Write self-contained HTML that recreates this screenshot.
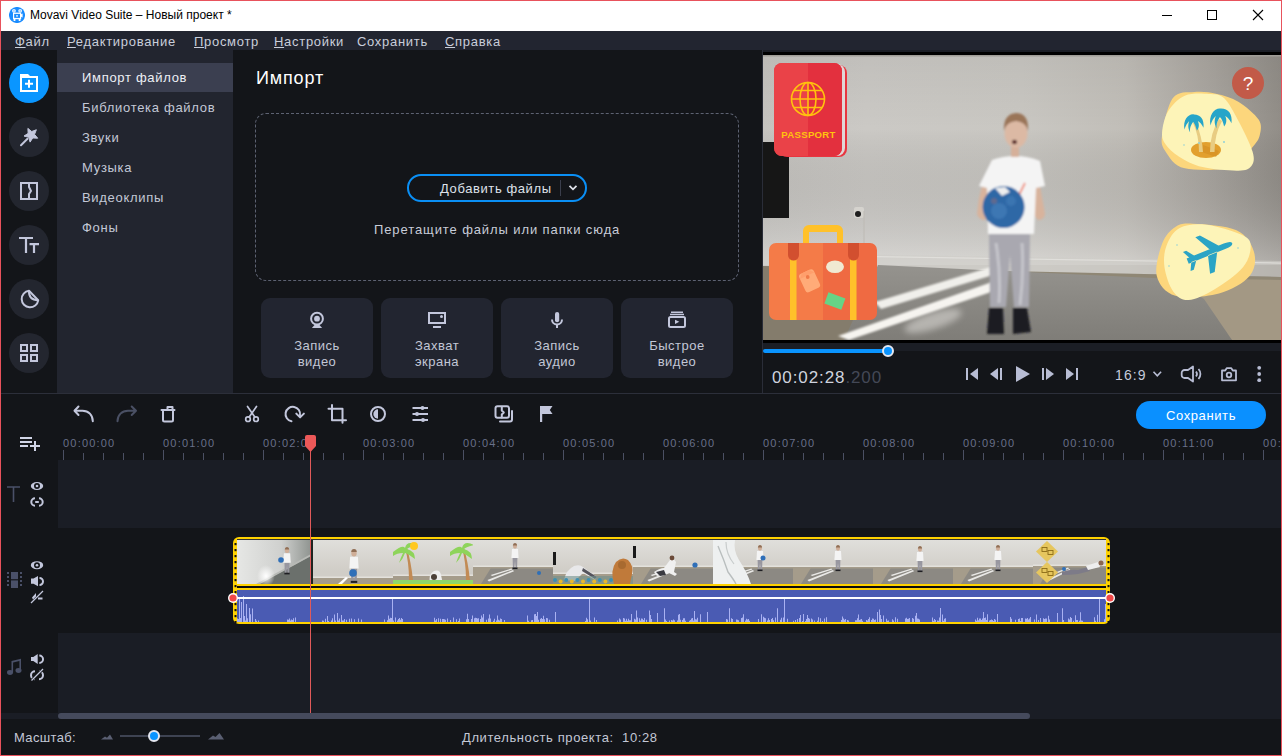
<!DOCTYPE html>
<html><head><meta charset="utf-8">
<style>
*{margin:0;padding:0;box-sizing:border-box}
html,body{width:1282px;height:756px;overflow:hidden;background:#131519;font-family:"Liberation Sans",sans-serif}
.a{position:absolute}
#frame{position:absolute;left:0;top:0;width:1282px;height:756px;border:1px solid #e8525c;pointer-events:none;z-index:100}
.t{position:absolute;white-space:nowrap}
.menu{color:#c9cedb;font-size:13px;letter-spacing:0.7px;top:34px}
.menu u{text-decoration:underline;text-underline-offset:1px;text-decoration-thickness:1px}
.sub{left:82px;color:#c3c8d6;font-size:13px;letter-spacing:0.7px}
.circ{position:absolute;left:9px;width:40px;height:40px;border-radius:50%;background:#23262f}
.card{position:absolute;top:298px;width:112px;height:80px;border-radius:9px;background:#222530}
.cardt{position:absolute;left:0;width:112px;top:40px;text-align:center;color:#c2c7d6;font-size:13px;line-height:16px;letter-spacing:0.5px}
.rl{position:absolute;top:437px;color:#687089;font-size:11px;letter-spacing:1.2px}
.ic{position:absolute}
</style></head><body>
<div id="frame"></div>

<!-- title bar -->
<div class="a" style="left:0;top:0;width:1282px;height:31px;background:#fff"></div>
<svg class="a" style="left:9px;top:7px" width="16" height="16" viewBox="9 7 16 16">
 <circle cx="17" cy="15" r="8.05" fill="#1a8cff"/>
 <g fill="#fff">
 <rect x="12.3" y="9.3" width="3.3" height="3.3" rx="1"/><rect x="18.5" y="9.3" width="3.3" height="3.3" rx="1"/>
 <rect x="13" y="12.6" width="8.2" height="6.6"/>
 <path d="M21 14.2l1.6-0.8v4.2l-1.6-0.8z"/>
 <rect x="13.6" y="19" width="1.8" height="2"/><rect x="18.7" y="19" width="1.8" height="2"/>
 </g>
 <g fill="#1a8cff"><rect x="13.4" y="10.4" width="1.1" height="1.1"/><rect x="19.6" y="10.4" width="1.1" height="1.1"/>
 <rect x="14.2" y="13.9" width="5.8" height="4"/></g>
 <rect x="16.2" y="15.2" width="1.6" height="1.4" fill="#fff"/>
</svg>
<div class="t" style="left:30px;top:8px;font-size:12px;color:#000">Movavi Video Suite – Новый проект *</div>
<div class="a" style="left:1162px;top:15px;width:10px;height:1px;background:#000"></div>
<div class="a" style="left:1207px;top:10px;width:10px;height:10px;border:1px solid #000"></div>
<svg class="a" style="left:1252px;top:9px" width="12" height="12" viewBox="0 0 12 12"><path d="M1 1L11 11M11 1L1 11" stroke="#000" stroke-width="1.1"/></svg>

<!-- menu bar -->
<div class="a" style="left:0;top:31px;width:1282px;height:19px;background:#222530"></div>
<div class="t menu" style="left:15px"><u>Ф</u>айл</div>
<div class="t menu" style="left:67px"><u>Р</u>едактирование</div>
<div class="t menu" style="left:194px"><u>П</u>росмотр</div>
<div class="t menu" style="left:274px"><u>Н</u>астройки</div>
<div class="t menu" style="left:357px">Сохранить</div>
<div class="t menu" style="left:445px"><u>С</u>правка</div>

<!-- left icon bar -->
<div class="a" style="left:0;top:50px;width:57px;height:343px;background:#131519"></div>
<div class="circ" style="top:63px;background:#0a96ff"></div>
<div class="circ" style="top:117px"></div>
<div class="circ" style="top:171px"></div>
<div class="circ" style="top:225px"></div>
<div class="circ" style="top:279px"></div>
<div class="circ" style="top:333px"></div>
<svg class="a" style="left:9px;top:63px" width="40" height="40" viewBox="0 0 40 40"><path d="M11 11h8l2 2h8v16h-18z M13 15v12h14v-12z" fill="#fff" fill-rule="evenodd"/><path d="M19 16.8h2v3h3v2h-3v3h-2v-3h-3v-2h3z" fill="#fff"/></svg>
<svg class="a" style="left:9px;top:117px" width="40" height="40" viewBox="0 0 40 40"><polygon points="18.89,11.40 22.73,14.54 27.36,12.74 25.56,17.37 28.70,21.21 23.74,20.93 21.06,25.11 19.80,20.30 14.99,19.04 19.17,16.36" fill="#c3c7dc" stroke="#c3c7dc" stroke-width="1" stroke-linejoin="round"/><path d="M12 28.3L18.5 21.8" stroke="#c3c7dc" stroke-width="2" stroke-linecap="round"/></svg>
<svg class="a" style="left:9px;top:171px" width="40" height="40" viewBox="0 0 40 40"><rect x="12" y="12" width="16" height="16" fill="none" stroke="#c3c7dc" stroke-width="2"/><path d="M20 12v4l2 4l-2 3v5" fill="none" stroke="#c3c7dc" stroke-width="2"/></svg>
<svg class="a" style="left:9px;top:225px" width="40" height="40" viewBox="0 0 40 40"><path d="M10 13h14M17 13v15M20.5 19.1h9.5M25 19.1v8.9" stroke="#c3c7dc" stroke-width="2.2" fill="none"/></svg>
<svg class="a" style="left:9px;top:279px" width="40" height="40" viewBox="0 0 40 40"><path d="M20 11.8A8.3 8.3 0 1 0 29.2 21.3Z" fill="none" stroke="#c3c7dc" stroke-width="2" stroke-linejoin="round"/><path d="M20 11.8Q19.5 21 29.2 21.3" fill="none" stroke="#c3c7dc" stroke-width="2"/></svg>
<svg class="a" style="left:9px;top:333px" width="40" height="40" viewBox="0 0 40 40"><g fill="none" stroke="#c3c7dc" stroke-width="2"><rect x="12" y="12" width="6" height="6"/><rect x="22" y="12" width="6" height="6"/><rect x="12" y="22" width="6" height="6"/><rect x="22" y="22" width="6" height="6"/></g></svg>


<!-- submenu -->
<div class="a" style="left:57px;top:50px;width:176px;height:343px;background:#22252f"></div>
<div class="a" style="left:57px;top:63px;width:176px;height:29px;background:#3b3f50"></div>
<div class="t sub" style="top:70px;color:#eef0f5">Импорт файлов</div>
<div class="t sub" style="top:100px">Библиотека файлов</div>
<div class="t sub" style="top:130px">Звуки</div>
<div class="t sub" style="top:160px">Музыка</div>
<div class="t sub" style="top:190px">Видеоклипы</div>
<div class="t sub" style="top:220px">Фоны</div>

<!-- import panel -->
<div class="a" style="left:233px;top:50px;width:530px;height:343px;background:#131519"></div>
<div class="t" style="left:256px;top:68px;font-size:18px;color:#fff;letter-spacing:0.85px">Импорт</div>
<div class="a" style="left:255px;top:113px;width:484px;height:168px;border:1px dashed #5d6272;border-radius:11px"></div>
<div class="a" style="left:407px;top:174px;width:180px;height:28px;border:2px solid #0a8ff5;border-radius:14px"></div>
<div class="a" style="left:560px;top:180px;width:1px;height:16px;background:#3a3e4c"></div>
<svg class="a" style="left:568px;top:184px" width="10" height="8" viewBox="0 0 10 8"><path d="M1.5 1.8L5 5.3L8.5 1.8" fill="none" stroke="#dfe2ea" stroke-width="1.8"/></svg>
<div class="t" style="left:440px;top:181px;font-size:13px;color:#dfe2ea;letter-spacing:0.6px">Добавить файлы</div>
<div class="t" style="left:374px;top:222px;font-size:13px;color:#c8ccd8;letter-spacing:0.9px">Перетащите файлы или папки сюда</div>
<div class="card" style="left:261px"><div class="cardt">Запись<br>видео</div></div>
<div class="card" style="left:381px"><div class="cardt">Захват<br>экрана</div></div>
<div class="card" style="left:501px"><div class="cardt">Запись<br>аудио</div></div>
<div class="card" style="left:621px"><div class="cardt">Быстрое<br>видео</div></div>


<svg class="a" style="left:305px;top:308px" width="24" height="24" viewBox="305 308 24 24"><circle cx="317" cy="318.7" r="5.9" fill="none" stroke="#c3c7dc" stroke-width="2"/><circle cx="317" cy="318.7" r="2.9" fill="#c3c7dc"/><path d="M314.5 325h5l2.6 3h-10.2z" fill="#c3c7dc"/></svg>
<svg class="a" style="left:425px;top:308px" width="24" height="24" viewBox="425 308 24 24"><rect x="429" y="313" width="16" height="10" fill="none" stroke="#c3c7dc" stroke-width="2"/><circle cx="441.5" cy="316.6" r="1.5" fill="#c3c7dc"/><rect x="433" y="326" width="8" height="2" fill="#c3c7dc"/></svg>
<svg class="a" style="left:545px;top:308px" width="24" height="24" viewBox="545 308 24 24"><rect x="555" y="312" width="4.2" height="10.3" rx="2.1" fill="#c3c7dc"/><path d="M552 319.5a5 5 0 0 0 10 0" fill="none" stroke="#c3c7dc" stroke-width="2"/><rect x="556" y="324.5" width="2" height="3.5" fill="#c3c7dc"/></svg>
<svg class="a" style="left:665px;top:308px" width="24" height="24" viewBox="665 308 24 24"><rect x="671" y="311.5" width="12" height="1.5" fill="#c3c7dc"/><rect x="670" y="313.7" width="14" height="1.5" fill="#c3c7dc"/><rect x="669" y="317" width="16" height="10" rx="1.5" fill="none" stroke="#c3c7dc" stroke-width="2"/><path d="M675 319.7v4.3l4.3-2.15z" fill="#c3c7dc"/></svg>

<!-- preview -->
<div class="a" style="left:763px;top:50px;width:518px;height:343px;background:#131519"></div>
<div class="a" style="left:763px;top:50px;width:518px;height:2px;background:#1b1e26"></div><div class="a" style="left:763px;top:52px;width:518px;height:3px;background:#000"></div><div class="a" style="left:762px;top:50px;width:1px;height:343px;background:#2a2d38"></div>
<svg class="a" style="left:763px;top:55px" width="518" height="285" viewBox="0 0 518 285"><defs>
<linearGradient id="wallh" x1="0" y1="0" x2="1" y2="0">
 <stop offset="0" stop-color="#c6c4c0"/><stop offset="0.2" stop-color="#cbc9c5"/><stop offset="0.5" stop-color="#c9c7c2"/><stop offset="0.7" stop-color="#c1beb8"/><stop offset="0.86" stop-color="#aaa6a0"/><stop offset="1" stop-color="#928e88"/>
</linearGradient>
<linearGradient id="wallv" x1="0" y1="0" x2="0" y2="1">
 <stop offset="0" stop-color="#000" stop-opacity="0.05"/><stop offset="0.35" stop-color="#000" stop-opacity="0"/><stop offset="1" stop-color="#fff" stop-opacity="0.28"/>
</linearGradient>
<linearGradient id="floorg" x1="0" y1="0" x2="0" y2="1">
 <stop offset="0" stop-color="#9b9285"/><stop offset="1" stop-color="#a39a8a"/>
</linearGradient>
<linearGradient id="carpet" x1="0" y1="0" x2="0" y2="1">
 <stop offset="0" stop-color="#95938e"/><stop offset="1" stop-color="#7f7d78"/>
</linearGradient>
<radialGradient id="glow" cx="0.5" cy="0.8" r="0.5"><stop offset="0" stop-color="#eceae6" stop-opacity="0.5"/><stop offset="1" stop-color="#eceae6" stop-opacity="0"/></radialGradient>
<filter id="bl" x="-20%" y="-20%" width="140%" height="140%"><feGaussianBlur stdDeviation="1.2"/></filter>
<filter id="bl2" x="-50%" y="-50%" width="200%" height="200%"><feGaussianBlur stdDeviation="3"/></filter>
</defs><rect width="518" height="285" fill="url(#wallh)"/><rect width="518" height="210" fill="url(#wallv)"/><rect x="0" y="0" width="518" height="1.5" fill="#a09d97"/><path d="M0 198L518 206V222L0 211z" fill="#cfcdc8" opacity="0.6"/><path d="M20 199.5L518 207.5v1.2L20 200.7z" fill="#e4e2de" opacity="0.8"/><path d="M0 211L518 222V285H0z" fill="#8f8775"/><path d="M0 211L180 215L120 285H0z" fill="#7d7565" opacity="0.6"/><path d="M400 223L518 225V285H469z" fill="#a39884"/><path d="M81 285L115 210L410 224L441 244L469 285z" fill="url(#carpet)"/><g filter="url(#bl)" fill="#f6f4f0"><path d="M75 281L229 227L231 236L86 285z"/><path d="M112 247L228 212L230 220L118 254z" opacity="0.95"/></g><ellipse cx="170" cy="266" rx="30" ry="8" fill="#e8e6e2" opacity="0.5" filter="url(#bl2)" transform="rotate(-18 170 266)"/><rect x="0" y="87" width="26" height="76" fill="#161616"/><rect x="91" y="152" width="10" height="11" rx="2" fill="#d5d3ce"/><circle cx="95" cy="159" r="3" fill="#1e1e1e"/><path d="M101 156v50" stroke="#bdbab4" stroke-width="1"/><g filter="url(#bl)"><path d="M226 178h41l-1 74h-15l-4 -52l-4 52h-16z" fill="#a9a8b0"/><path d="M233 188q5 30 3 60M259 188q2 30 -2 62" stroke="#d8d8de" stroke-width="3" fill="none" opacity="0.6"/><path d="M226 253h14l1 26h-17zM250 253h14l4 24l-18 2z" fill="#1b1b20"/><path d="M219 131q-4 14 -5 28q2 6 8 6l4 -6l-1 -26zM277 131l5 28q-1 6 -7 6l-5 -6l1 -26z" fill="#d8b39c"/><path d="M229 105q11 -4 23 -4q13 0 25 5l5 25l-9 2l-2 46h-46l-1 -46l-8 -2z" fill="#f4f4f4"/><path d="M262 128l-7 14" stroke="#f08a78" stroke-width="1.8"/><rect x="248" y="92" width="8" height="10" fill="#d6b09a"/><ellipse cx="253" cy="78" rx="11.5" ry="15" fill="#dcb9a4"/><path d="M241 76q-1 -17 12 -18q13 0 12 18q-2 -9 -12 -10q-10 1 -12 10z" fill="#9a7458"/><ellipse cx="251.5" cy="87" rx="2.6" ry="2.2" fill="#5b2e2a"/><circle cx="240.6" cy="152" r="21" fill="#2d67a6"/><circle cx="236" cy="156" r="8" fill="#4f8cc4" opacity="0.45"/><circle cx="248" cy="146" r="5" fill="#4f8cc4" opacity="0.4"/><circle cx="231" cy="146" r="3" fill="#c07060" opacity="0.35"/><path d="M232 133l10 -1l5 5l-8 4z" fill="#eeeeee"/></g><rect x="16" y="10" width="68" height="92" rx="8" fill="#e8353f"/><rect x="14" y="9" width="68" height="92" rx="8" fill="#e0d6d6"/><rect x="11" y="8" width="68" height="93" rx="8" fill="#e53640"/><path d="M45 8h26a8 8 0 0 1 8 8v77a8 8 0 0 1 -8 8h-26z" fill="#e3303e"/><path d="M19 8h26v93h-26a8 8 0 0 1 -8 -8v-77a8 8 0 0 1 8 -8z" fill="#ea4248"/><g fill="none" stroke="#ffc20e" stroke-width="1.6"><circle cx="45" cy="44" r="16.5"/><ellipse cx="45" cy="44" rx="8" ry="16.5"/><path d="M45 27.5v33M28.5 44h33M31 35.5h28M31 52.5h28"/></g><text x="45.5" y="83" text-anchor="middle" font-family="Liberation Sans" font-weight="bold" font-size="9.6" fill="#ffc20e" letter-spacing="0.3">PASSPORT</text><path d="M40 188v-12a6 6 0 0 1 6 -6h28a6 6 0 0 1 6 6v12h-6v-11h-28v11z" fill="#ffc12a"/><rect x="6" y="158" width="108" height="107" rx="7" fill="none"/><path d="M13 188h47v77h-47a7 7 0 0 1 -7 -7v-63a7 7 0 0 1 7 -7z" fill="#f47b48"/><path d="M60 188h47a7 7 0 0 1 7 7v63a7 7 0 0 1 -7 7h-47z" fill="#ef6a42"/><rect x="27" y="200" width="6.5" height="65" fill="#ffc12a"/><rect x="87" y="200" width="6.5" height="65" fill="#ffc12a"/><path d="M25 188h11v12a5 5 0 0 1 -11 0z M85 188h11v12a5 5 0 0 1 -11 0z" fill="#d24f2f"/><ellipse cx="72" cy="211.8" rx="9" ry="6.3" fill="#f0e9d2"/><g transform="rotate(-25 46.6 225.8)"><rect x="38.6" y="215.8" width="16" height="20" rx="3" fill="#ffab78"/><path d="M38.6 220l4 -4.2h8l4 4.2z" fill="#ff9f6c"/></g><circle cx="44.7" cy="222" r="1.9" fill="#f07a48"/><rect x="62.9" y="240" width="18" height="12" fill="#66d486" transform="rotate(20 71.9 246)"/><path d="M409.9 43.1C415.3 36.0 424.0 37.8 431.3 37.1C438.6 36.4 446.6 37.3 453.9 38.9C461.2 40.5 468.4 42.4 475.3 46.7C482.2 51.0 492.0 59.0 495.6 64.5C499.2 70.0 497.8 75.4 496.8 80.0C495.8 84.6 494.1 86.7 489.6 92.0C485.1 97.3 481.3 108.5 470.0 112.0C458.7 115.5 433.0 115.8 421.8 113.3C410.6 110.8 406.5 102.2 402.7 96.7C398.9 91.2 397.9 88.9 399.1 80.0C400.3 71.1 404.5 50.2 409.9 43.1z" fill="#fcd67c"/><path d="M399.1 77.6C399.5 72.0 401.3 62.4 405.1 56.2C408.9 50.1 415.1 43.6 421.8 40.7C428.6 37.8 439.1 38.5 445.6 38.9C452.1 39.3 456.1 38.6 461.0 43.1C465.9 47.6 470.5 56.8 475.3 65.7C480.1 74.6 487.4 89.2 489.6 96.7C491.8 104.2 490.8 107.8 488.4 111.0C486.0 114.2 483.4 115.5 475.3 115.7C467.2 115.9 449.5 114.5 439.6 112.1C429.7 109.7 422.0 105.2 415.8 101.4C409.6 97.6 405.5 93.5 402.7 89.5C399.9 85.5 398.7 83.1 399.1 77.6z" fill="#fdf4b8"/><ellipse cx="443" cy="95" rx="15" ry="8" fill="#e2a02e"/><path d="M440 90l16 6l-3 6l-14 -5z" fill="#d08a20" opacity="0.5"/><path d="M430 68q6 12 6 29h4q-1 -16 -7 -29zM456 64q-9 14 -9 33h4.5q0 -18 7.5 -31z" fill="#e8cc82"/><path d="M421.5 74.6C419.6 65.1 425.3 58.5 431.0 59.4C437.6 59.4 441.4 64.2 440.5 72.7C438.6 68.9 436.7 67.0 434.8 66.0C436.7 69.8 435.8 73.7 433.9 75.5C432.9 71.8 431.9 68.9 430.1 67.0C428.1 69.8 426.2 73.7 427.2 77.5C424.4 72.7 425.3 68.9 426.2 66.0C424.4 68.0 422.4 70.8 421.5 74.6z" fill="#26a5c9"/><path d="M447.5 70.4C445.4 59.9 451.7 52.5 458.0 53.6C465.4 53.6 469.6 58.9 468.5 68.3C466.4 64.1 464.3 62.0 462.2 61.0C464.3 65.2 463.2 69.3 461.1 71.5C460.1 67.2 459.1 64.1 456.9 62.0C454.9 65.2 452.8 69.3 453.8 73.5C450.6 68.3 451.7 64.1 452.8 61.0C450.6 63.0 448.6 66.2 447.5 70.4z" fill="#26a5c9"/><g fill="#8fd0d8"><circle cx="421" cy="90" r="0.8"/><circle cx="461" cy="87" r="1"/><circle cx="436" cy="88" r="1"/></g><path d="M399.3 188.3C402.4 180.1 407.3 175.3 412.4 172.0C417.5 168.7 419.6 168.2 429.8 168.7C440.0 169.2 463.3 170.5 473.5 175.2C483.7 179.9 488.8 189.4 491.0 197.0C493.2 204.6 492.4 214.1 486.6 221.0C480.8 227.9 468.4 235.2 456.0 238.5C443.6 241.8 422.8 243.6 412.4 240.7C402.0 237.8 396.0 229.7 393.8 221.0C391.6 212.3 396.2 196.5 399.3 188.3z" fill="#fcd67c"/><path d="M403.6 190.5C406.1 183.9 410.1 176.4 416.7 173.0C423.3 169.6 432.8 168.7 443.0 169.8C453.2 170.9 470.6 176.2 478.0 179.6C485.4 183.0 487.4 185.1 487.7 190.5C488.0 195.9 486.0 205.0 480.0 212.3C474.0 219.6 460.8 228.8 451.7 234.2C442.6 239.6 432.4 244.6 425.5 245.0C418.6 245.4 414.2 241.8 410.2 236.4C406.2 231.0 402.6 220.0 401.5 212.3C400.4 204.7 401.1 197.1 403.6 190.5z" fill="#fdf4b8"/><g transform="translate(446 197.5) rotate(-22)"><path d="M-23 -2.8h40q8 0 8 2.8q0 2.8 -8 2.8h-40z M2 -2.2l-9 -17h5l14 17z M-2 2.2l-5 18h5l10 -18z M-20 -2.2l-4 -8h3.5l6 8z M-20 2.2l-4 8h3.5l6 -8z" fill="#2ba4c5"/></g><g fill="#8fd0d8"><circle cx="406" cy="211" r="0.8"/><circle cx="475" cy="193" r="0.8"/><circle cx="414" cy="190" r="0.8"/></g><circle cx="485" cy="28" r="16" fill="#c25a48"/><text x="485" y="35" text-anchor="middle" font-family="Liberation Sans" font-size="19" fill="#fff">?</text></svg>
<div class="a" style="left:763px;top:340px;width:518px;height:3px;background:#000"></div>
<div class="a" style="left:763px;top:343px;width:518px;height:8px;background:#1b1e25"></div>
<div class="a" style="left:763px;top:349px;width:125px;height:4px;background:#0a94ff;border-radius:2px"></div>
<div class="a" style="left:882px;top:345px;width:12px;height:12px;border-radius:50%;background:#0a94ff;border:2px solid #e4e7f0"></div>
<div class="t" style="left:772px;top:368px;font-size:17px;color:#cfd3de;letter-spacing:0.9px">00:02:28<span style="color:#434856">.200</span></div>
<div class="t" style="left:1115px;top:367px;font-size:14px;color:#c5cadb;letter-spacing:1.1px">16:9</div>


<svg class="a" style="left:955px;top:362px" width="320" height="26" viewBox="955 362 320 26">
<g fill="#b8bdd4">
<rect x="966" y="368" width="2" height="12"/><path d="M970 374l8-6v12z"/>
<path d="M990 374l8-6v12z"/><rect x="1000" y="368" width="2" height="12"/>
<path d="M1016 366v16l14-8z"/>
<rect x="1042" y="368" width="2" height="12"/><path d="M1046 368v12l8-6z"/>
<path d="M1066 368v12l8-6z"/><rect x="1076" y="368" width="2" height="12"/>
<circle cx="1259.2" cy="367.8" r="1.9"/><circle cx="1259.2" cy="374" r="1.9"/><circle cx="1259.2" cy="380.2" r="1.9"/>
</g>
<path d="M1153.5 371.8l3.8 4l3.8-4" fill="none" stroke="#b8bdd4" stroke-width="1.6"/>
<g fill="none" stroke="#b8bdd4" stroke-width="1.8" stroke-linejoin="round">
<path d="M1184.5 370h3.5l5-3.5v15l-5-3.5h-3.5a2.8 2.8 0 0 1 -2.8 -2.8v-2.4a2.8 2.8 0 0 1 2.8 -2.8z"/>
<path d="M1196 371.5a4 4 0 0 1 0 5"/><path d="M1198.5 369a7.5 7.5 0 0 1 0 10"/>
<path d="M1222 370.5h3.2l1.5-2.3h4.6l1.5 2.3h3.2v9.8h-14z"/>
</g>
<circle cx="1229" cy="375" r="2.3" fill="none" stroke="#b8bdd4" stroke-width="1.8"/>
</svg>

<!-- divider -->
<div class="a" style="left:0;top:393px;width:1282px;height:1px;background:#2c2f3a"></div>

<!-- timeline -->
<div class="a" style="left:0;top:394px;width:1282px;height:326px;background:#131519"></div>
<div class="a" style="left:1136px;top:401px;width:130px;height:28px;border-radius:14px;background:#0a90ff"></div>
<div class="t" style="left:1166px;top:408px;font-size:13px;color:#fff;letter-spacing:0.6px">Сохранить</div>


<svg class="a" style="left:60px;top:398px" width="520" height="30" viewBox="60 398 520 30">
<g fill="none" stroke="#c3c7dc" stroke-width="2" stroke-linecap="round" stroke-linejoin="round">
<path d="M78.5 406.5L74.5 410.8L78.5 415"/><path d="M75 410.8h7.5c6 0 10.3 4 10.3 10.5"/>
<path d="M167.5 409.5v-2.5h5v2.5"/><path d="M161.5 410h13"/><path d="M163 410.5v9.5a1.5 1.5 0 0 0 1.5 1.5h7a1.5 1.5 0 0 0 1.5 -1.5v-9.5"/>
<path d="M247.5 406.5L254.8 417" stroke-width="1.7"/><path d="M256.5 406.5L249.2 417" stroke-width="1.7"/>
<circle cx="248" cy="419.2" r="2.3" stroke-width="1.7"/><circle cx="256" cy="419.2" r="2.3" stroke-width="1.7"/>
<path d="M291.5 421.3A7.3 7.3 0 1 1 300 415.5"/><path d="M296.3 413.6L300.1 417.4L303.9 413.6"/>
<path d="M332 405v15.2h14"/><path d="M328.5 408.8h14v14"/>
<circle cx="378" cy="414" r="7"/>
<path d="M412.5 408h15.5M412.5 414h15.5M412.5 420h15.5" stroke-linecap="butt"/>
<rect x="495.5" y="406.3" width="13.5" height="11.5" rx="2"/><path d="M500 421.5h10a2 2 0 0 0 2 -2v-8.5"/>
<path d="M501.8 407v3.5l2 2l-2 2v3"/>
</g>
<path d="M136 410.8L131.7 406.5M136 410.8L131.7 415M135.5 410.8h-7.5c-6 0 -10.5 4 -10.5 10.5" fill="none" stroke="#4a5064" stroke-width="2" stroke-linecap="round" stroke-linejoin="round"/>
<g fill="#c3c7dc">
<path d="M378 409.3a4.7 4.7 0 0 0 0 9.4z"/>
<circle cx="422.5" cy="408" r="2"/><circle cx="417" cy="414" r="2"/><circle cx="423" cy="420" r="2"/>
<rect x="540" y="406" width="2.2" height="16"/><path d="M540 406h12.5l-2.7 4l2.7 4h-12.5z"/>
</g>
</svg>
<svg class="a" style="left:10px;top:430px" width="40" height="25" viewBox="10 430 40 25"><g fill="#d0d4e6"><rect x="20" y="437" width="12" height="2"/><rect x="20" y="441" width="12" height="2"/><rect x="20" y="445" width="8" height="2"/><rect x="34" y="441" width="2" height="10"/><rect x="30" y="445" width="10" height="2"/></g></svg>

<svg class="a" style="left:0;top:432px" width="1282" height="28"><rect x="63" y="18" width="1" height="10" fill="#4b5063"/><rect x="83" y="21" width="1" height="7" fill="#4b5063"/><rect x="103" y="21" width="1" height="7" fill="#4b5063"/><rect x="123" y="21" width="1" height="7" fill="#4b5063"/><rect x="143" y="21" width="1" height="7" fill="#4b5063"/><rect x="163" y="18" width="1" height="10" fill="#4b5063"/><rect x="183" y="21" width="1" height="7" fill="#4b5063"/><rect x="203" y="21" width="1" height="7" fill="#4b5063"/><rect x="223" y="21" width="1" height="7" fill="#4b5063"/><rect x="243" y="21" width="1" height="7" fill="#4b5063"/><rect x="263" y="18" width="1" height="10" fill="#4b5063"/><rect x="283" y="21" width="1" height="7" fill="#4b5063"/><rect x="303" y="21" width="1" height="7" fill="#4b5063"/><rect x="323" y="21" width="1" height="7" fill="#4b5063"/><rect x="343" y="21" width="1" height="7" fill="#4b5063"/><rect x="363" y="18" width="1" height="10" fill="#4b5063"/><rect x="383" y="21" width="1" height="7" fill="#4b5063"/><rect x="403" y="21" width="1" height="7" fill="#4b5063"/><rect x="423" y="21" width="1" height="7" fill="#4b5063"/><rect x="443" y="21" width="1" height="7" fill="#4b5063"/><rect x="463" y="18" width="1" height="10" fill="#4b5063"/><rect x="483" y="21" width="1" height="7" fill="#4b5063"/><rect x="503" y="21" width="1" height="7" fill="#4b5063"/><rect x="523" y="21" width="1" height="7" fill="#4b5063"/><rect x="543" y="21" width="1" height="7" fill="#4b5063"/><rect x="563" y="18" width="1" height="10" fill="#4b5063"/><rect x="583" y="21" width="1" height="7" fill="#4b5063"/><rect x="603" y="21" width="1" height="7" fill="#4b5063"/><rect x="623" y="21" width="1" height="7" fill="#4b5063"/><rect x="643" y="21" width="1" height="7" fill="#4b5063"/><rect x="663" y="18" width="1" height="10" fill="#4b5063"/><rect x="683" y="21" width="1" height="7" fill="#4b5063"/><rect x="703" y="21" width="1" height="7" fill="#4b5063"/><rect x="723" y="21" width="1" height="7" fill="#4b5063"/><rect x="743" y="21" width="1" height="7" fill="#4b5063"/><rect x="763" y="18" width="1" height="10" fill="#4b5063"/><rect x="783" y="21" width="1" height="7" fill="#4b5063"/><rect x="803" y="21" width="1" height="7" fill="#4b5063"/><rect x="823" y="21" width="1" height="7" fill="#4b5063"/><rect x="843" y="21" width="1" height="7" fill="#4b5063"/><rect x="863" y="18" width="1" height="10" fill="#4b5063"/><rect x="883" y="21" width="1" height="7" fill="#4b5063"/><rect x="903" y="21" width="1" height="7" fill="#4b5063"/><rect x="923" y="21" width="1" height="7" fill="#4b5063"/><rect x="943" y="21" width="1" height="7" fill="#4b5063"/><rect x="963" y="18" width="1" height="10" fill="#4b5063"/><rect x="983" y="21" width="1" height="7" fill="#4b5063"/><rect x="1003" y="21" width="1" height="7" fill="#4b5063"/><rect x="1023" y="21" width="1" height="7" fill="#4b5063"/><rect x="1043" y="21" width="1" height="7" fill="#4b5063"/><rect x="1063" y="18" width="1" height="10" fill="#4b5063"/><rect x="1083" y="21" width="1" height="7" fill="#4b5063"/><rect x="1103" y="21" width="1" height="7" fill="#4b5063"/><rect x="1123" y="21" width="1" height="7" fill="#4b5063"/><rect x="1143" y="21" width="1" height="7" fill="#4b5063"/><rect x="1163" y="18" width="1" height="10" fill="#4b5063"/><rect x="1183" y="21" width="1" height="7" fill="#4b5063"/><rect x="1203" y="21" width="1" height="7" fill="#4b5063"/><rect x="1223" y="21" width="1" height="7" fill="#4b5063"/><rect x="1243" y="21" width="1" height="7" fill="#4b5063"/><rect x="1263" y="18" width="1" height="10" fill="#4b5063"/></svg>
<div class="rl" style="left:63px">00:00:00</div>
<div class="rl" style="left:163px">00:01:00</div>
<div class="rl" style="left:263px">00:02:00</div>
<div class="rl" style="left:363px">00:03:00</div>
<div class="rl" style="left:463px">00:04:00</div>
<div class="rl" style="left:563px">00:05:00</div>
<div class="rl" style="left:663px">00:06:00</div>
<div class="rl" style="left:763px">00:07:00</div>
<div class="rl" style="left:863px">00:08:00</div>
<div class="rl" style="left:963px">00:09:00</div>
<div class="rl" style="left:1063px">00:10:00</div>
<div class="rl" style="left:1163px">00:11:00</div>
<div class="rl" style="left:1263px">00:12:00</div>
<div class="a" style="left:58px;top:460px;width:1223px;height:68px;background:#1a1d25"></div>
<div class="a" style="left:58px;top:633px;width:1223px;height:80px;background:#1a1d25"></div>
<div class="a" style="left:0;top:713px;width:1282px;height:6px;background:#1a1d25"></div>
<div class="a" style="left:58px;top:713px;width:972px;height:6px;border-radius:3px;background:#454a5c"></div>


<svg class="a" style="left:0;top:460px" width="58" height="253" viewBox="0 460 58 253">
<path d="M7 487h13M13.5 487v15" stroke="#4a5068" stroke-width="1.6" fill="none"/>
<g fill="#c3c7dc">
<path d="M30.8 486a6.2 4 0 0 0 12.4 0a6.2 4 0 0 0 -12.4 0zM34 486a3 3 0 0 0 6 0a3 3 0 0 0 -6 0z" fill-rule="evenodd"/>
<circle cx="37" cy="486" r="1.3"/>
<path d="M30.8 565.2a6.2 4 0 0 0 12.4 0a6.2 4 0 0 0 -12.4 0zM34 565.2a3 3 0 0 0 6 0a3 3 0 0 0 -6 0z" fill-rule="evenodd"/>
<circle cx="37" cy="565.2" r="1.3"/>
<path d="M31 578.5h2.5l4.5-2.5v10.3l-4.5-2.5h-2.5z"/>
<path d="M31 657h2.3l4.4-3v10.1l-4.4-3h-2.3z"/>
</g>
<g fill="none" stroke="#c3c7dc" stroke-width="2">
<path d="M35 498.3a3.7 3.7 0 0 0 0 7.4M39 498.3a3.7 3.7 0 0 1 0 7.4M35.2 502h3.6"/>
<path d="M39.5 578a3.5 3.5 0 0 1 0 7"/>
<path d="M39.3 655.5a3.6 3.6 0 0 1 0 7.5"/>
<path d="M35 671.3a4 4 0 0 0 0 8M39 671.3a4 4 0 0 1 0 8"/>
</g>
<path d="M31 603l12-12" stroke="#c3c7dc" stroke-width="1.3"/>
<path d="M32 597.5l4-4.5v3.5l-3 3zM38 597.5h4.5v2h-4.5z" fill="#c3c7dc"/>
<path d="M31.5 680.5l11.5-11.5" stroke="#131519" stroke-width="3"/>
<path d="M31.5 680.5l11.5-11.5" stroke="#c3c7dc" stroke-width="1.3"/>
<g fill="#4a5068">
<rect x="11" y="572" width="7" height="16"/>
<rect x="7" y="572" width="2" height="2"/><rect x="7" y="576" width="2" height="2"/><rect x="7" y="580" width="2" height="2"/><rect x="7" y="584" width="2" height="2"/>
<rect x="20" y="572" width="2" height="2"/><rect x="20" y="576" width="2" height="2"/><rect x="20" y="580" width="2" height="2"/><rect x="20" y="584" width="2" height="2"/>
</g>
<rect x="11" y="579.2" width="7" height="1.2" fill="#131519"/>
<g fill="#4a5068">
<ellipse cx="10" cy="672.5" rx="3" ry="2.4"/><ellipse cx="18.5" cy="670.5" rx="3" ry="2.4"/>
<path d="M11.5 672.5v-11.5l9.5-2.3v11.8h-1.6v-9.6l-6.3 1.5v10.1z"/>
</g>
</svg>

<svg class="a" style="left:227px;top:535px" width="889" height="91" viewBox="227 535 889 91"><defs><linearGradient id="wallg" x1="0" y1="0" x2="0" y2="1"><stop offset="0" stop-color="#e0dfdb"/><stop offset="0.7" stop-color="#d0cdc7"/></linearGradient><linearGradient id="th1" x1="0" y1="0" x2="1" y2="0"><stop offset="0" stop-color="#e6e7e5"/><stop offset="0.6" stop-color="#cfd0ce"/><stop offset="1" stop-color="#8f9490"/></linearGradient><radialGradient id="glare"><stop offset="0" stop-color="#fff" stop-opacity="1"/><stop offset="1" stop-color="#fff" stop-opacity="0"/></radialGradient></defs><rect x="233" y="537" width="877" height="87" rx="6" fill="#ffd200"/><rect x="237" y="539" width="869" height="1" fill="#333"/><rect x="237" y="540" width="74" height="44" fill="url(#th1)"/><path d="M258 584L311 556V584z" fill="#6b706c"/><path d="M256 584L311 554v2L260 584z" fill="#b8bab6"/><ellipse cx="266" cy="576" rx="9" ry="11" fill="url(#glare)"/><path d="M284.48 562.75h5.04l-0.315 10.5h-1.5750000000000002l-0.63 -7.3500000000000005l-0.63 7.3500000000000005h-1.5750000000000002z" fill="#9897a0"/><rect x="284.375" y="572.725" width="5.25" height="1.6800000000000002" fill="#1e1e22"/><path d="M283.85 553.3h6.300000000000001l0.63 9.450000000000001h-7.5600000000000005z" fill="#f4f4f4"/><ellipse cx="287" cy="550.15" rx="2.205" ry="2.8350000000000004" fill="#cfae98"/><path d="M284.795 549.52a2.205 2.625 0 0 1 4.41 0z" fill="#8f6e55"/><circle cx="281" cy="560" r="2.8" fill="#2f6fb8"/><rect x="311" y="540" width="2" height="44" fill="#1e2420"/><rect x="313" y="540" width="80" height="44" fill="url(#wallg)"/><rect x="313" y="578" width="80" height="6" fill="#a59c8b"/><rect x="313" y="576.5" width="80" height="1.5" fill="#e3e1dc"/><path d="M350.88 568.5h6.24l-0.39 13.0h-1.9500000000000002l-0.78 -9.1l-0.78 9.1h-1.9500000000000002z" fill="#9897a0"/><rect x="350.75" y="580.85" width="6.5" height="2.08" fill="#1e1e22"/><path d="M350.1 556.8h7.800000000000001l0.78 11.700000000000001h-9.360000000000001z" fill="#f4f4f4"/><ellipse cx="354" cy="552.9" rx="2.7300000000000004" ry="3.5100000000000002" fill="#cfae98"/><path d="M351.27 552.12a2.7300000000000004 3.25 0 0 1 5.460000000000001 0z" fill="#8f6e55"/><circle cx="353" cy="573" r="3.8" fill="#2f6fb8"/><path d="M338 584l8-7l2 1l-6 6z" fill="#fff"/><rect x="393" y="540" width="80" height="44" fill="url(#wallg)"/><rect x="393" y="576" width="80" height="8" fill="#a59c8b"/><rect x="393" y="574.5" width="80" height="1.5" fill="#e3e1dc"/><path d="M430 584q-2 -10 4 -13q6 -2 7 4l2 9z" fill="#eeeeee"/><circle cx="434" cy="577" r="3" fill="#4b4038"/><rect x="393" y="580" width="80" height="4" fill="#8fd86a"/><path d="M405 548q4 14 4 32h4q-2 -18 -6 -32z" fill="#c28b55"/><path d="M393 552q10 -8 12 -4q2 -8 12 -3q-8 2 -10 4q8 2 8 10q-8 -6 -10 -6q-2 6 -6 10q2 -6 4 -10q-6 0 -10 3z" fill="#8ed45a"/><path d="M462 548q4 14 4 32h4q-2 -18 -6 -32z" fill="#c28b55"/><path d="M450 552q10 -8 12 -4q2 -8 12 -3q-8 2 -10 4q8 2 8 10q-8 -6 -10 -6q-2 6 -6 10q2 -6 4 -10q-6 0 -10 3z" fill="#8ed45a"/><circle cx="414" cy="546" r="4" fill="#ffc820"/><rect x="473" y="540" width="80" height="44" fill="url(#wallg)"/><rect x="473" y="567" width="80" height="17" fill="#a59c8b"/><path d="M481.0 584L490.6 568.5H553V584z" fill="#8c8983"/><rect x="473" y="565.5" width="80" height="1.5" fill="#e3e1dc"/><path d="M487.4 580L513.0 570l1 1.2L489.0 581.5z M490.6 575L511.4 568.5l1 1L492.2 576z" fill="#f4f4f2" opacity="0.9"/><path d="M512.6 558.0h4.8l-0.3 10.0h-1.5l-0.6 -7.0l-0.6 7.0h-1.5z" fill="#9897a0"/><rect x="512.5" y="567.5" width="5.0" height="1.6" fill="#1e1e22"/><path d="M512.0 549.0h6.0l0.6 9.0h-7.2z" fill="#f4f4f4"/><ellipse cx="515" cy="546.0" rx="2.1" ry="2.7" fill="#cfae98"/><path d="M512.9 545.4a2.1 2.5 0 0 1 4.2 0z" fill="#8f6e55"/><circle cx="539" cy="573" r="2" fill="#2f6fb8"/><rect x="553" y="540" width="80" height="44" fill="url(#wallg)"/><rect x="553" y="574" width="80" height="10" fill="#a59c8b"/><rect x="553" y="572.5" width="80" height="1.5" fill="#e3e1dc"/><rect x="553" y="552" width="3" height="13" fill="#1a1a1a"/><path d="M564 580q2 -10 10 -14q6 -2 9 1l14 10l-2 3l-12 -7l-8 8z" fill="#e8e8ea"/><path d="M583 568l14 9l-2 2l-13 -8z" fill="#55545c"/><path d="M553 576h80v8h-80z" fill="#6f8f8a" opacity="0.6"/><circle cx="555.0" cy="580.0" r="2" fill="#3d8fb0"/><circle cx="560.6" cy="581.5" r="2" fill="#e6b830"/><circle cx="566.2" cy="580.0" r="2" fill="#3d8fb0"/><circle cx="571.8" cy="581.5" r="2" fill="#e6b830"/><circle cx="577.4" cy="580.0" r="2" fill="#3d8fb0"/><circle cx="583.0" cy="581.5" r="2" fill="#e6b830"/><circle cx="588.6" cy="580.0" r="2" fill="#3d8fb0"/><circle cx="594.2" cy="581.5" r="2" fill="#e6b830"/><circle cx="599.8" cy="580.0" r="2" fill="#3d8fb0"/><circle cx="605.4" cy="581.5" r="2" fill="#e6b830"/><circle cx="611.0" cy="580.0" r="2" fill="#3d8fb0"/><circle cx="616.6" cy="581.5" r="2" fill="#e6b830"/><circle cx="622.2" cy="580.0" r="2" fill="#3d8fb0"/><circle cx="627.8" cy="581.5" r="2" fill="#e6b830"/><path d="M614 584q-4 -14 2 -22q6 -6 12 -2q6 6 4 14l-2 10z" fill="#c07a3a"/><circle cx="622" cy="565" r="4" fill="#a86a30"/><rect x="633" y="540" width="80" height="44" fill="url(#wallg)"/><rect x="633" y="567" width="80" height="17" fill="#a59c8b"/><path d="M641.0 584L650.6 568.5H713V584z" fill="#8c8983"/><rect x="633" y="565.5" width="80" height="1.5" fill="#e3e1dc"/><path d="M647.4 580L673.0 570l1 1.2L649.0 581.5z M650.6 575L671.4 568.5l1 1L652.2 576z" fill="#f4f4f2" opacity="0.9"/><rect x="633" y="546" width="3" height="12" fill="#1a1a1a"/><path d="M654 572q6 -4 10 -4l6 -8q4 -2 6 2l-2 10l3 2l-2 2l-6 -3l-12 3z" fill="#f0f0f0"/><circle cx="672" cy="558" r="2.4" fill="#6b4a38"/><path d="M656 572l8 -2l2 5l-6 1z" fill="#3a3a40"/><circle cx="695" cy="565" r="2.6" fill="#2f6fb8"/><rect x="713" y="540" width="80" height="44" fill="url(#wallg)"/><rect x="713" y="567" width="80" height="17" fill="#a59c8b"/><path d="M721.0 584L730.6 568.5H793V584z" fill="#8c8983"/><rect x="713" y="565.5" width="80" height="1.5" fill="#e3e1dc"/><path d="M727.4 580L753.0 570l1 1.2L729.0 581.5z M730.6 575L751.4 568.5l1 1L732.2 576z" fill="#f4f4f2" opacity="0.9"/><path d="M757.6 560.0h4.8l-0.3 10.0h-1.5l-0.6 -7.0l-0.6 7.0h-1.5z" fill="#9897a0"/><rect x="757.5" y="569.5" width="5.0" height="1.6" fill="#1e1e22"/><path d="M757.0 551.0h6.0l0.6 9.0h-7.2z" fill="#f4f4f4"/><ellipse cx="760" cy="548.0" rx="2.1" ry="2.7" fill="#cfae98"/><path d="M757.9 547.4a2.1 2.5 0 0 1 4.2 0z" fill="#8f6e55"/><circle cx="763" cy="558" r="2.5" fill="#2f6fb8"/><path d="M713 540h22q-2 10 4 20q8 12 12 24h-38z" fill="#eef0f0"/><path d="M718 546q6 14 10 26q6 8 8 12" stroke="#b9bebe" stroke-width="1.4" fill="none"/><path d="M726 542q0 12 8 22" stroke="#c8cccc" stroke-width="1.2" fill="none"/><rect x="793" y="540" width="80" height="44" fill="url(#wallg)"/><rect x="793" y="567" width="80" height="17" fill="#a59c8b"/><path d="M801.0 584L810.6 568.5H873V584z" fill="#8c8983"/><rect x="793" y="565.5" width="80" height="1.5" fill="#e3e1dc"/><path d="M807.4 580L833.0 570l1 1.2L809.0 581.5z M810.6 575L831.4 568.5l1 1L812.2 576z" fill="#f4f4f2" opacity="0.9"/><path d="M835.6 560.0h4.8l-0.3 10.0h-1.5l-0.6 -7.0l-0.6 7.0h-1.5z" fill="#9897a0"/><rect x="835.5" y="569.5" width="5.0" height="1.6" fill="#1e1e22"/><path d="M835.0 551.0h6.0l0.6 9.0h-7.2z" fill="#f4f4f4"/><ellipse cx="838" cy="548.0" rx="2.1" ry="2.7" fill="#cfae98"/><path d="M835.9 547.4a2.1 2.5 0 0 1 4.2 0z" fill="#8f6e55"/><rect x="873" y="540" width="80" height="44" fill="url(#wallg)"/><rect x="873" y="567" width="80" height="17" fill="#a59c8b"/><path d="M881.0 584L890.6 568.5H953V584z" fill="#8c8983"/><rect x="873" y="565.5" width="80" height="1.5" fill="#e3e1dc"/><path d="M887.4 580L913.0 570l1 1.2L889.0 581.5z M890.6 575L911.4 568.5l1 1L892.2 576z" fill="#f4f4f2" opacity="0.9"/><path d="M917.6 561.0h4.8l-0.3 10.0h-1.5l-0.6 -7.0l-0.6 7.0h-1.5z" fill="#9897a0"/><rect x="917.5" y="570.5" width="5.0" height="1.6" fill="#1e1e22"/><path d="M917.0 552.0h6.0l0.6 9.0h-7.2z" fill="#f4f4f4"/><ellipse cx="920" cy="549.0" rx="2.1" ry="2.7" fill="#cfae98"/><path d="M917.9 548.4a2.1 2.5 0 0 1 4.2 0z" fill="#8f6e55"/><rect x="953" y="540" width="80" height="44" fill="url(#wallg)"/><rect x="953" y="567" width="80" height="17" fill="#a59c8b"/><path d="M961.0 584L970.6 568.5H1033V584z" fill="#8c8983"/><rect x="953" y="565.5" width="80" height="1.5" fill="#e3e1dc"/><path d="M967.4 580L993.0 570l1 1.2L969.0 581.5z M970.6 575L991.4 568.5l1 1L972.2 576z" fill="#f4f4f2" opacity="0.9"/><path d="M995.6 560.0h4.8l-0.3 10.0h-1.5l-0.6 -7.0l-0.6 7.0h-1.5z" fill="#9897a0"/><rect x="995.5" y="569.5" width="5.0" height="1.6" fill="#1e1e22"/><path d="M995.0 551.0h6.0l0.6 9.0h-7.2z" fill="#f4f4f4"/><ellipse cx="998" cy="548.0" rx="2.1" ry="2.7" fill="#cfae98"/><path d="M995.9 547.4a2.1 2.5 0 0 1 4.2 0z" fill="#8f6e55"/><rect x="1033" y="540" width="73" height="44" fill="url(#wallg)"/><rect x="1033" y="566" width="73" height="18" fill="#a59c8b"/><path d="M1040.3 584L1049.06 567.5H1106V584z" fill="#8c8983"/><rect x="1033" y="564.5" width="73" height="1.5" fill="#e3e1dc"/><path d="M1046.14 580L1069.5 569l1 1.2L1047.6 581.5z M1049.06 575L1068.04 567.5l1 1L1050.52 576z" fill="#f4f4f2" opacity="0.9"/><path d="M1062 572q8 -3 16 -2l10 -3l2 4l-12 3q-8 1 -16 1z" fill="#7d7b88"/><path d="M1086 566l12 -4l2 5l-12 3z" fill="#eeeeee"/><circle cx="1101" cy="563" r="2.5" fill="#8a6550"/><circle cx="1064" cy="569" r="2" fill="#2f6fb8"/><path d="M1047 541.0l11 10.5l-11 10.5l-11-10.5z" fill="#e6c65e"/><rect x="1042" y="547.5" width="5" height="4" fill="none" stroke="#8a6a18" stroke-width="0.9"/><rect x="1048" y="550.5" width="5" height="4" fill="none" stroke="#8a6a18" stroke-width="0.9"/><path d="M1047 562.0l11 10.5l-11 10.5l-11-10.5z" fill="#e6c65e"/><rect x="1042" y="568.5" width="5" height="4" fill="none" stroke="#8a6a18" stroke-width="0.9"/><rect x="1048" y="571.5" width="5" height="4" fill="none" stroke="#8a6a18" stroke-width="0.9"/><rect x="237" y="584" width="869" height="2" fill="#ffd200"/><rect x="237" y="586" width="869" height="2" fill="#0c0c0c"/><rect x="237" y="590" width="869" height="32" fill="#4a5bb3"/><path d="M237 622v-3.4h1v3.4zM238 622v-2.9h1v2.9zM239 622v-3.8h1v3.8zM240 622v-4.0h1v4.0zM243 622v-7.3h1v7.3zM244 622v-6.1h1v6.1zM245 622v-1.5h1v1.5zM247 622v-3.8h1v3.8zM250 622v-7.8h1v7.8zM252 622v-13.5h1v13.5zM255 622v-3.1h1v3.1zM256 622v-1.2h1v1.2zM258 622v-1.6h1v1.6zM287 622v-2.4h1v2.4zM288 622v-2.3h1v2.3zM289 622v-3.5h1v3.5zM290 622v-1.4h1v1.4zM291 622v-2.6h1v2.6zM292 622v-1.9h1v1.9zM293 622v-3.7h1v3.7zM295 622v-4.4h1v4.4zM322 622v-1.5h1v1.5zM323 622v-1.3h1v1.3zM325 622v-3.2h1v3.2zM327 622v-6.0h1v6.0zM328 622v-1.1h1v1.1zM331 622v-1.5h1v1.5zM332 622v-3.8h1v3.8zM334 622v-7.5h1v7.5zM335 622v-1.6h1v1.6zM337 622v-1.5h1v1.5zM338 622v-1.6h1v1.6zM339 622v-3.4h1v3.4zM341 622v-7.1h1v7.1zM342 622v-1.6h1v1.6zM343 622v-1.6h1v1.6zM344 622v-2.9h1v2.9zM346 622v-2.2h1v2.2zM349 622v-3.3h1v3.3zM351 622v-3.5h1v3.5zM354 622v-2.7h1v2.7zM358 622v-3.4h1v3.4zM361 622v-2.4h1v2.4zM384 622v-2.6h1v2.6zM387 622v-1.7h1v1.7zM388 622v-6.4h1v6.4zM389 622v-3.2h1v3.2zM390 622v-4.3h1v4.3zM391 622v-4.0h1v4.0zM392 622v-1.7h1v1.7zM393 622v-1.6h1v1.6zM395 622v-4.5h1v4.5zM397 622v-1.4h1v1.4zM398 622v-2.9h1v2.9zM399 622v-4.0h1v4.0zM400 622v-2.3h1v2.3zM401 622v-4.0h1v4.0zM402 622v-2.9h1v2.9zM434 622v-4.3h1v4.3zM435 622v-1.5h1v1.5zM436 622v-2.9h1v2.9zM438 622v-3.7h1v3.7zM440 622v-3.3h1v3.3zM442 622v-2.9h1v2.9zM443 622v-3.0h1v3.0zM444 622v-2.7h1v2.7zM445 622v-2.3h1v2.3zM447 622v-3.6h1v3.6zM450 622v-2.1h1v2.1zM453 622v-4.4h1v4.4zM456 622v-2.7h1v2.7zM458 622v-1.1h1v1.1zM459 622v-3.5h1v3.5zM466 622v-2.8h1v2.8zM467 622v-8.3h1v8.3zM468 622v-3.1h1v3.1zM471 622v-3.0h1v3.0zM472 622v-6.4h1v6.4zM474 622v-3.8h1v3.8zM475 622v-4.3h1v4.3zM476 622v-3.9h1v3.9zM477 622v-3.5h1v3.5zM478 622v-3.7h1v3.7zM480 622v-3.0h1v3.0zM481 622v-6.5h1v6.5zM482 622v-4.4h1v4.4zM483 622v-8.1h1v8.1zM486 622v-2.2h1v2.2zM488 622v-3.6h1v3.6zM489 622v-7.5h1v7.5zM490 622v-3.5h1v3.5zM493 622v-1.2h1v1.2zM494 622v-3.3h1v3.3zM496 622v-1.4h1v1.4zM497 622v-6.4h1v6.4zM498 622v-2.2h1v2.2zM499 622v-1.5h1v1.5zM500 622v-3.4h1v3.4zM501 622v-2.9h1v2.9zM504 622v-2.0h1v2.0zM527 622v-6.6h1v6.6zM528 622v-1.3h1v1.3zM531 622v-1.8h1v1.8zM532 622v-2.1h1v2.1zM534 622v-7.8h1v7.8zM535 622v-7.9h1v7.9zM536 622v-6.1h1v6.1zM537 622v-1.8h1v1.8zM538 622v-2.2h1v2.2zM540 622v-3.3h1v3.3zM541 622v-4.0h1v4.0zM542 622v-3.0h1v3.0zM543 622v-6.3h1v6.3zM544 622v-2.7h1v2.7zM546 622v-4.1h1v4.1zM547 622v-3.8h1v3.8zM549 622v-2.3h1v2.3zM585 622v-1.1h1v1.1zM586 622v-4.3h1v4.3zM587 622v-2.7h1v2.7zM589 622v-2.0h1v2.0zM590 622v-1.6h1v1.6zM594 622v-4.4h1v4.4zM596 622v-2.0h1v2.0zM617 622v-1.6h1v1.6zM619 622v-3.5h1v3.5zM620 622v-2.6h1v2.6zM623 622v-3.9h1v3.9zM624 622v-3.5h1v3.5zM625 622v-1.3h1v1.3zM626 622v-3.3h1v3.3zM627 622v-1.2h1v1.2zM628 622v-3.2h1v3.2zM629 622v-1.7h1v1.7zM630 622v-1.7h1v1.7zM631 622v-7.9h1v7.9zM634 622v-3.2h1v3.2zM635 622v-2.5h1v2.5zM636 622v-11.5h1v11.5zM637 622v-4.5h1v4.5zM639 622v-3.7h1v3.7zM640 622v-1.5h1v1.5zM641 622v-3.4h1v3.4zM642 622v-3.3h1v3.3zM643 622v-1.9h1v1.9zM644 622v-4.1h1v4.1zM646 622v-2.3h1v2.3zM649 622v-11.5h1v11.5zM650 622v-6.9h1v6.9zM651 622v-3.0h1v3.0zM664 622v-13.8h1v13.8zM665 622v-2.5h1v2.5zM666 622v-1.1h1v1.1zM669 622v-1.6h1v1.6zM671 622v-1.9h1v1.9zM672 622v-1.5h1v1.5zM673 622v-2.5h1v2.5zM674 622v-1.8h1v1.8zM677 622v-1.6h1v1.6zM678 622v-7.3h1v7.3zM679 622v-7.9h1v7.9zM680 622v-2.2h1v2.2zM682 622v-2.1h1v2.1zM683 622v-3.7h1v3.7zM684 622v-3.8h1v3.8zM685 622v-1.2h1v1.2zM689 622v-1.3h1v1.3zM690 622v-2.0h1v2.0zM691 622v-3.6h1v3.6zM692 622v-4.0h1v4.0zM693 622v-1.4h1v1.4zM694 622v-10.9h1v10.9zM695 622v-2.8h1v2.8zM696 622v-2.6h1v2.6zM697 622v-4.3h1v4.3zM700 622v-7.7h1v7.7zM726 622v-3.1h1v3.1zM727 622v-2.4h1v2.4zM729 622v-13.7h1v13.7zM731 622v-3.8h1v3.8zM732 622v-3.0h1v3.0zM736 622v-2.5h1v2.5zM737 622v-2.3h1v2.3zM738 622v-1.7h1v1.7zM741 622v-4.1h1v4.1zM742 622v-4.5h1v4.5zM743 622v-7.8h1v7.8zM745 622v-1.6h1v1.6zM746 622v-3.2h1v3.2zM747 622v-2.4h1v2.4zM748 622v-3.1h1v3.1zM749 622v-1.3h1v1.3zM758 622v-3.0h1v3.0zM761 622v-7.8h1v7.8zM763 622v-5.3h1v5.3zM764 622v-4.2h1v4.2zM765 622v-3.8h1v3.8zM767 622v-1.4h1v1.4zM768 622v-3.7h1v3.7zM769 622v-2.1h1v2.1zM771 622v-2.9h1v2.9zM772 622v-4.0h1v4.0zM773 622v-1.7h1v1.7zM775 622v-4.5h1v4.5zM777 622v-13.7h1v13.7zM780 622v-2.2h1v2.2zM781 622v-4.3h1v4.3zM783 622v-4.5h1v4.5zM787 622v-3.2h1v3.2zM793 622v-1.2h1v1.2zM795 622v-1.9h1v1.9zM797 622v-2.9h1v2.9zM799 622v-4.0h1v4.0zM800 622v-7.1h1v7.1zM802 622v-1.1h1v1.1zM803 622v-7.9h1v7.9zM805 622v-1.0h1v1.0zM806 622v-3.1h1v3.1zM807 622v-6.9h1v6.9zM808 622v-4.0h1v4.0zM809 622v-3.2h1v3.2zM811 622v-3.5h1v3.5zM812 622v-2.5h1v2.5zM814 622v-1.6h1v1.6zM817 622v-1.3h1v1.3zM818 622v-4.8h1v4.8zM820 622v-3.7h1v3.7zM822 622v-1.1h1v1.1zM824 622v-3.6h1v3.6zM826 622v-4.8h1v4.8zM841 622v-1.9h1v1.9zM842 622v-5.6h1v5.6zM843 622v-3.6h1v3.6zM844 622v-2.3h1v2.3zM845 622v-3.0h1v3.0zM847 622v-1.9h1v1.9zM848 622v-1.5h1v1.5zM855 622v-1.8h1v1.8zM856 622v-1.8h1v1.8zM857 622v-3.7h1v3.7zM858 622v-7.5h1v7.5zM859 622v-2.0h1v2.0zM860 622v-2.4h1v2.4zM861 622v-3.1h1v3.1zM862 622v-1.2h1v1.2zM866 622v-2.0h1v2.0zM867 622v-1.5h1v1.5zM868 622v-3.0h1v3.0zM869 622v-4.7h1v4.7zM871 622v-1.9h1v1.9zM872 622v-3.6h1v3.6zM873 622v-3.2h1v3.2zM874 622v-1.9h1v1.9zM875 622v-2.5h1v2.5zM879 622v-12.6h1v12.6zM880 622v-6.9h1v6.9zM881 622v-3.1h1v3.1zM883 622v-6.4h1v6.4zM886 622v-3.3h1v3.3zM887 622v-1.2h1v1.2zM888 622v-1.4h1v1.4zM892 622v-2.8h1v2.8zM893 622v-1.5h1v1.5zM895 622v-4.8h1v4.8zM897 622v-3.2h1v3.2zM905 622v-3.4h1v3.4zM906 622v-4.3h1v4.3zM907 622v-2.9h1v2.9zM908 622v-3.3h1v3.3zM909 622v-3.9h1v3.9zM912 622v-4.1h1v4.1zM913 622v-3.2h1v3.2zM915 622v-6.2h1v6.2zM916 622v-9.1h1v9.1zM917 622v-3.5h1v3.5zM918 622v-3.3h1v3.3zM919 622v-2.4h1v2.4zM932 622v-4.4h1v4.4zM933 622v-1.3h1v1.3zM934 622v-2.9h1v2.9zM935 622v-2.1h1v2.1zM937 622v-1.6h1v1.6zM938 622v-1.3h1v1.3zM939 622v-4.5h1v4.5zM940 622v-13.9h1v13.9zM942 622v-7.4h1v7.4zM943 622v-1.2h1v1.2zM944 622v-3.2h1v3.2zM945 622v-3.8h1v3.8zM975 622v-2.6h1v2.6zM976 622v-1.3h1v1.3zM977 622v-4.3h1v4.3zM978 622v-1.8h1v1.8zM979 622v-3.5h1v3.5zM980 622v-3.4h1v3.4zM981 622v-2.0h1v2.0zM982 622v-3.4h1v3.4zM983 622v-9.9h1v9.9zM984 622v-4.1h1v4.1zM985 622v-4.4h1v4.4zM986 622v-2.0h1v2.0zM987 622v-7.8h1v7.8zM989 622v-1.6h1v1.6zM990 622v-2.0h1v2.0zM991 622v-2.6h1v2.6zM992 622v-2.1h1v2.1zM993 622v-1.0h1v1.0zM994 622v-2.9h1v2.9zM995 622v-2.3h1v2.3zM997 622v-3.9h1v3.9zM1010 622v-5.1h1v5.1zM1011 622v-3.3h1v3.3zM1015 622v-2.3h1v2.3zM1018 622v-2.9h1v2.9zM1019 622v-3.5h1v3.5zM1020 622v-1.0h1v1.0zM1021 622v-3.9h1v3.9zM1022 622v-4.1h1v4.1zM1025 622v-3.4h1v3.4zM1026 622v-3.2h1v3.2zM1027 622v-4.0h1v4.0zM1028 622v-2.6h1v2.6zM1029 622v-3.4h1v3.4zM1030 622v-5.0h1v5.0zM1034 622v-2.4h1v2.4zM1036 622v-7.5h1v7.5zM1038 622v-2.0h1v2.0zM1040 622v-3.9h1v3.9zM1043 622v-3.8h1v3.8zM1044 622v-3.0h1v3.0zM1045 622v-3.6h1v3.6zM1046 622v-3.5h1v3.5zM1048 622v-6.2h1v6.2zM1049 622v-2.5h1v2.5zM1062 622v-13.7h1v13.7zM1063 622v-2.1h1v2.1zM1068 622v-3.6h1v3.6zM1069 622v-2.6h1v2.6zM1070 622v-5.1h1v5.1zM1071 622v-3.9h1v3.9zM1073 622v-1.2h1v1.2zM1075 622v-6.7h1v6.7zM1076 622v-2.1h1v2.1zM1077 622v-2.1h1v2.1zM1079 622v-1.3h1v1.3zM1080 622v-9.8h1v9.8zM1081 622v-1.5h1v1.5zM1082 622v-1.2h1v1.2zM1094 622v-4.7h1v4.7zM1095 622v-1.3h1v1.3zM1097 622v-7.3h1v7.3zM1099 622v-2.6h1v2.6zM1104 622v-2.8h1v2.8zM1105 622v-4.0h1v4.0zM239 622v-24.0h1v24.0zM241 622v-20.0h1v20.0zM243 622v-26.0h1v26.0zM246 622v-18.0h1v18.0zM249 622v-14.0h1v14.0zM392 622v-24.0h1v24.0zM589 622v-24.0h1v24.0zM784 622v-23.0h1v23.0zM1099 622v-25.0h1v25.0zM1105 622v-18.0h1v18.0zM537 622v-10.0h1v10.0zM555 622v-10.0h1v10.0zM657 622v-9.0h1v9.0zM707 622v-10.0h1v10.0zM877 622v-10.0h1v10.0zM1057 622v-9.0h1v9.0zM997 622v-8.0h1v8.0zM337 622v-9.0h1v9.0z" fill="#a9b1f2"/><rect x="233" y="597" width="877" height="2" fill="#ffffff"/><rect x="234.5" y="543" width="2" height="2.2" fill="#111"/><rect x="1107.5" y="543" width="2" height="2.2" fill="#111"/><rect x="234.5" y="549" width="2" height="2.2" fill="#111"/><rect x="1107.5" y="549" width="2" height="2.2" fill="#111"/><rect x="234.5" y="555" width="2" height="2.2" fill="#111"/><rect x="1107.5" y="555" width="2" height="2.2" fill="#111"/><rect x="234.5" y="561" width="2" height="2.2" fill="#111"/><rect x="1107.5" y="561" width="2" height="2.2" fill="#111"/><rect x="234.5" y="567" width="2" height="2.2" fill="#111"/><rect x="1107.5" y="567" width="2" height="2.2" fill="#111"/><rect x="234.5" y="573" width="2" height="2.2" fill="#111"/><rect x="1107.5" y="573" width="2" height="2.2" fill="#111"/><rect x="234.5" y="579" width="2" height="2.2" fill="#111"/><rect x="1107.5" y="579" width="2" height="2.2" fill="#111"/><rect x="234.5" y="585" width="2" height="2.2" fill="#111"/><rect x="1107.5" y="585" width="2" height="2.2" fill="#111"/><rect x="234.5" y="591" width="2" height="2.2" fill="#111"/><rect x="1107.5" y="591" width="2" height="2.2" fill="#111"/><rect x="234.5" y="597" width="2" height="2.2" fill="#111"/><rect x="1107.5" y="597" width="2" height="2.2" fill="#111"/><rect x="234.5" y="603" width="2" height="2.2" fill="#111"/><rect x="1107.5" y="603" width="2" height="2.2" fill="#111"/><rect x="234.5" y="609" width="2" height="2.2" fill="#111"/><rect x="1107.5" y="609" width="2" height="2.2" fill="#111"/><rect x="234.5" y="615" width="2" height="2.2" fill="#111"/><rect x="1107.5" y="615" width="2" height="2.2" fill="#111"/><rect x="234.5" y="621" width="2" height="2.2" fill="#111"/><rect x="1107.5" y="621" width="2" height="2.2" fill="#111"/><circle cx="233" cy="598" r="5" fill="#ffffff"/><circle cx="233" cy="598" r="3.6" fill="#f04848"/><circle cx="1110" cy="598" r="5" fill="#ffffff"/><circle cx="1110" cy="598" r="3.6" fill="#f04848"/></svg>
<!-- bottom bar -->
<div class="a" style="left:0;top:719px;width:1282px;height:37px;background:#131519"></div>
<div class="t" style="left:14px;top:730px;font-size:13px;color:#c3c8d6;letter-spacing:0.35px">Масштаб:</div>
<div class="a" style="left:120px;top:735px;width:80px;height:2px;background:#3e4352"></div>
<div class="a" style="left:148px;top:730px;width:12px;height:12px;border-radius:50%;background:#0a94ff;border:2px solid #e4e7f0"></div>
<div class="t" style="left:462px;top:730px;font-size:13px;color:#c3c8d6;letter-spacing:0.6px">Длительность проекта:&nbsp; 10:28</div>


<div class="a" style="left:310px;top:445px;width:1px;height:268px;background:#e05a5a;z-index:5"></div>
<svg class="a" style="left:304px;top:434px;z-index:6" width="13" height="19" viewBox="0 0 13 19"><path d="M1 3a2 2 0 0 1 2-2h7a2 2 0 0 1 2 2v9l-5.5 6l-5.5-6z" fill="#ec5858"/></svg>

<svg class="a" style="left:100px;top:730px" width="130" height="12" viewBox="100 730 130 12"><path d="M101 739.5l4-3l2 1.2l3-3.2l3 5z" fill="#5a5f72"/><path d="M208 739.5l5-4l2.5 1.5l4-4l4.5 6.5z" fill="#5a5f72"/></svg>
</body></html>
